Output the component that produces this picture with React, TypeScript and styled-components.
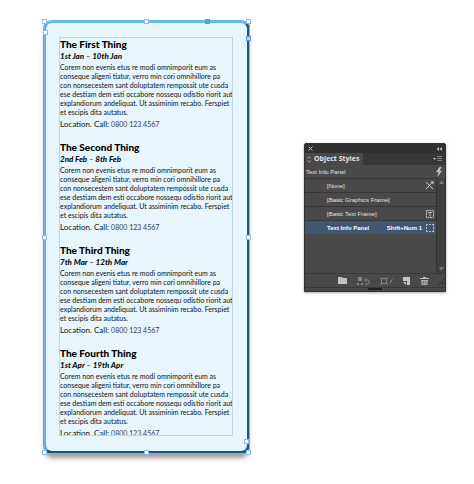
import React from "react";
import styled, { createGlobalStyle, css } from "styled-components";

const GlobalStyle = createGlobalStyle`
  * { box-sizing: border-box; }
  body { margin: 0; background: #fff; }
  h2, p, ul { margin: 0; padding: 0; }
  button { font: inherit; color: inherit; border: 0; padding: 0; background: none; }
`;

const Page = styled.main`
  display: grid;
  grid-template-columns: minmax(207px, 207fr) minmax(142px, 142fr);
  column-gap: 54px;
  align-items: start;
  padding: 20px 28px 31px 43px;
`;

const Card = styled.section`
  position: relative;
  padding: 15px 15px 16px 14px;
  border: 3px solid;
  border-color: #5cb6ea #1d5b84 #1a5279 #55aae4;
  border-radius: 9px;
  background: #e7f5fd;
  box-shadow: 0 6px 5px -2px rgba(60, 50, 50, 0.5);
`;

const Outline = styled.div`
  position: absolute;
  inset: -2px -3px -3px -2px;
  border: 1px solid #79b3f2;
`;

const Handle = styled.span<{ $x: string; $y: string; $fill?: string }>`
  position: absolute;
  left: ${(p) => p.$x};
  top: ${(p) => p.$y};
  width: 5px;
  height: 5px;
  margin: -3px;
  border: 1px solid ${(p) => (p.$fill ? "#5a9be8" : "#8fbcf2")};
  background: ${(p) => p.$fill || "#fff"};
`;

const TextFrame = styled.div`
  height: 397px;
  overflow-x: visible;
  overflow-y: clip;
  outline: 1px solid #b8d6f0;
  color: #0c1216;
  white-space: nowrap;
  font-family: Lato, "Open Sans", sans-serif;
`;

const Entry = styled.article`
  padding-bottom: 11px;
`;

const Heading = styled.h2`
  font: 900 10px/12px Lato, "Open Sans", sans-serif;
  color: #000;
`;

const Dates = styled.p`
  font: italic 900 8px/12px Lato, "Open Sans", sans-serif;
`;

const Body = styled.p`
  padding-top: 1px;
  font-size: 7px;
  line-height: 9px;
`;

const Contact = styled.p`
  padding-top: 1px;
  font-size: 8px;
  line-height: 12px;

  span {
    color: #333f47;
    font-size: 7px;
  }
`;

const Panel = styled.aside`
  margin-top: 123px;
  border: 1px solid #333;
  border-radius: 2px 2px 0 0;
  background: #494949;
  color: #e2e2e2;
  font: 6px/14px "Liberation Sans", sans-serif;
  box-shadow: 0 1px 3px rgba(0, 0, 0, 0.35);
  white-space: nowrap;
`;

const TitleBar = styled.header`
  display: flex;
  justify-content: space-between;
  align-items: center;
  height: 9px;
  padding: 0 3px;
  background: #303030;
`;

const TabBar = styled.div`
  display: flex;
  justify-content: space-between;
  align-items: center;
  height: 12px;
  padding-right: 3px;
  background: #373737;
`;

const Tab = styled.button`
  display: flex;
  align-items: center;
  gap: 3px;
  height: 12px;
  padding: 0 4px 0 2px;
  background: #494949;
  font: 700 7px/12px "Open Sans", sans-serif;
`;

const Current = styled.div`
  display: flex;
  justify-content: space-between;
  align-items: center;
  height: 13px;
  padding: 0 2px 0 1px;
`;

const ListArea = styled.div`
  display: grid;
  grid-template-columns: 1fr 9px;
  height: 95px;
`;

const StyleList = styled.ul`
  list-style: none;
`;

const StyleRow = styled.button<{ $selected?: boolean }>`
  display: flex;
  align-items: center;
  gap: 4px;
  width: 100%;
  height: 14px;
  padding: 0 2px 0 22px;
  border-top: 1px solid #363636;
  text-align: left;
  ${(p) =>
    p.$selected &&
    css`
      background: #445570;
      color: #fff;
      font-weight: 700;
    `}
`;

const StyleName = styled.span`
  flex: 1;
`;

const ScrollTrack = styled.div`
  display: flex;
  flex-direction: column;
  justify-content: space-between;
  align-items: center;
  padding: 2px 0;
  border-left: 1px solid #333;
  background: #404040;
`;

const Tools = styled.footer`
  display: flex;
  justify-content: flex-end;
  align-items: center;
  gap: 10px;
  height: 14px;
  border-top: 1px solid #383838;
`;

const ToolButton = styled.button`
  display: flex;
`;

const GripBar = styled.div`
  height: 4px;
  border-top: 1px solid #383838;

  &::before {
    content: "";
    display: block;
    width: 14px;
    height: 2px;
    margin: 0 auto;
    background: #222;
  }
`;

const Icon = styled.svg`
  display: block;
  fill: none;
  stroke: #bdbdbd;
  flex: none;
`;

const bodyLines = [
  "Corem non evenis etus re modi omnimporit eum as",
  "conseque aligeni tiatur, verro min cori omnihillore pa",
  "con nonsecestem sant doluptatem rempossit ute cusda",
  "ese destiam dem esti occabore nossequ odistio riorit aut",
  "explandiorum andeliquat. Ut assiminim recabo. Ferspiet",
  "et escipis dita autatus.",
];

const events = [
  ["The First Thing", "1st Jan – 10th Jan"],
  ["The Second Thing", "2nd Feb – 8th Feb"],
  ["The Third Thing", "7th Mar – 12th Mar"],
  ["The Fourth Thing", "1st Apr – 19th Apr"],
];

const handles: [string, string, string?][] = [
  ["0%", "0%"],
  ["1px", "11px"],
  ["50%", "0%"],
  ["80%", "0%", "#5f9ff0"],
  ["100%", "0%"],
  ["100%", "17px", "#e8d264"],
  ["0%", "50%"],
  ["100%", "50%"],
  ["99%", "calc(100% - 11px)"],
  ["0%", "100%"],
  ["50%", "100%"],
  ["100%", "100%"],
];

const NoneIcon = () => (
  <Icon width="9" height="9" viewBox="0 0 9 9">
    <path d="M1 1l7 7M8 0.5L1 8" stroke="#c8c8c8" />
    <path d="M6.5 0.5l2 2" strokeWidth="1.4" stroke="#d8d8d8" />
  </Icon>
);
const TextFrameIcon = () => (
  <Icon width="8" height="8" viewBox="0 0 8 8">
    <rect x="0.5" y="0.5" width="7" height="7" strokeDasharray="2 0.6" />
    <path d="M2 2.5h4M4 2.5v4" />
  </Icon>
);
const FrameIcon = () => (
  <Icon width="8" height="8" viewBox="0 0 8 8">
    <path d="M0 0.5h2M3 0.5h2M6 0.5h2M0 7.5h2M3 7.5h2M6 7.5h2M0.5 0v2M0.5 3v2M0.5 6v2M7.5 0v2M7.5 3v2M7.5 6v2" />
  </Icon>
);

const styleRows = [
  { name: "[None]", icon: <NoneIcon /> },
  { name: "[Basic Graphics Frame]" },
  { name: "[Basic Text Frame]", icon: <TextFrameIcon /> },
  { name: "Text Info Panel", shortcut: "Shift+Num 1", icon: <FrameIcon />, selected: true },
];

export default function App() {
  return (
    <>
      <GlobalStyle />
      <Page>
        <Card>
          <TextFrame>
            {events.map(([title, dates]) => (
              <Entry key={title}>
                <Heading>{title}</Heading>
                <Dates>{dates}</Dates>
                <Body>
                  {bodyLines.map((line) => (
                    <React.Fragment key={line}>
                      {line}
                      <br />
                    </React.Fragment>
                  ))}
                </Body>
                <Contact>
                  Location. Call: <span>0800 123 4567</span>
                </Contact>
              </Entry>
            ))}
          </TextFrame>
          <Outline>
            {handles.map(([x, y, fill]) => (
              <Handle key={x + y} $x={x} $y={y} $fill={fill} />
            ))}
          </Outline>
        </Card>

        <Panel>
          <TitleBar>
            <ToolButton aria-label="Close">
              <Icon width="5" height="5" viewBox="0 0 5 5">
                <path d="M0.5 0.5l4 4M4.5 0.5l-4 4" />
              </Icon>
            </ToolButton>
            <ToolButton aria-label="Collapse">
              <Icon width="6" height="4" viewBox="0 0 6 4">
                <path d="M3 0v4L0.5 2zM6 0v4L3.5 2z" fill="#bdbdbd" stroke="none" />
              </Icon>
            </ToolButton>
          </TitleBar>
          <TabBar>
            <Tab>
              <Icon width="4" height="7" viewBox="0 0 4 7">
                <path d="M0.5 2.5L2 0.8l1.5 1.7M0.5 4.5L2 6.2l1.5-1.7" strokeWidth="0.8" />
              </Icon>
              Object Styles
            </Tab>
            <ToolButton aria-label="Panel menu">
              <Icon width="9" height="6" viewBox="0 0 9 6">
                <path d="M0 2h3L1.5 4z" fill="#bdbdbd" stroke="none" />
                <path d="M4 0.5h5M4 2.5h5M4 4.5h5" stroke="#808080" />
              </Icon>
            </ToolButton>
          </TabBar>
          <Current>
            Text Info Panel
            <ToolButton aria-label="Quick apply">
              <Icon width="8" height="10" viewBox="0 0 8 10">
                <path d="M4.5 0L0.8 5.6l2.8-0.8L2.4 10 7.2 3.4 4.4 4.2 6.4 0z" fill="#c8c8c8" stroke="none" />
              </Icon>
            </ToolButton>
          </Current>
          <ListArea>
            <StyleList>
              {styleRows.map((row) => (
                <li key={row.name}>
                  <StyleRow $selected={row.selected}>
                    <StyleName>{row.name}</StyleName>
                    {row.shortcut}
                    {row.icon}
                  </StyleRow>
                </li>
              ))}
            </StyleList>
            <ScrollTrack>
              <Icon width="5" height="4" viewBox="0 0 5 4">
                <path d="M0 4h5L2.5 0z" fill="#777" stroke="none" />
              </Icon>
              <Icon width="5" height="4" viewBox="0 0 5 4">
                <path d="M0 0h5L2.5 4z" fill="#777" stroke="none" />
              </Icon>
            </ScrollTrack>
          </ListArea>
          <Tools>
            <ToolButton aria-label="New style group">
              <Icon width="9" height="7" viewBox="0 0 9 7">
                <path d="M0 0h4l1 1h4v6H0z" fill="#c0c0c0" stroke="none" />
              </Icon>
            </ToolButton>
            <ToolButton aria-label="Clear attributes">
              <Icon width="13" height="8" viewBox="0 0 13 8">
                <path d="M1 0h4v4H1zM0 6h2v2H0zM4 6h2v2H4z" fill="#858585" stroke="none" />
                <path d="M8 3h2.5a2 2 0 0 1 0 4H8M9.5 1L7.5 3l2 2" stroke="#858585" />
              </Icon>
            </ToolButton>
            <ToolButton aria-label="Clear overrides">
              <Icon width="13" height="8" viewBox="0 0 13 8">
                <rect x="1.5" y="1.5" width="5" height="5" stroke="#858585" />
                <path d="M0 0h1v1H0zM7 0h1v1H7zM0 7h1v1H0zM7 7h1v1H7z" fill="#858585" stroke="none" />
                <path d="M9 7l1-3 3-3-1.5 4z" fill="#7a7a7a" stroke="none" />
              </Icon>
            </ToolButton>
            <ToolButton aria-label="New style">
              <Icon width="7" height="8" viewBox="0 0 7 8">
                <path d="M0 0h7v8H4V4H0z" fill="#c4c4c4" stroke="none" />
                <path d="M0 5h3v3z" fill="#c4c4c4" stroke="none" />
              </Icon>
            </ToolButton>
            <ToolButton aria-label="Delete style">
              <Icon width="9" height="8" viewBox="0 0 9 8">
                <path d="M0 1.5h9M3 0.5h3" />
                <path d="M1 3h7L7.3 8H1.7z" fill="#aaa" stroke="none" />
                <path d="M3.2 4v3M5.8 4v3" stroke="#555" strokeWidth="0.8" />
              </Icon>
            </ToolButton>
            <Icon width="6" height="8" viewBox="0 0 6 8">
              <path d="M0 8l6-7M3 8l3-3.5" stroke="#2b2b2b" />
            </Icon>
          </Tools>
          <GripBar />
        </Panel>
      </Page>
    </>
  );
}
